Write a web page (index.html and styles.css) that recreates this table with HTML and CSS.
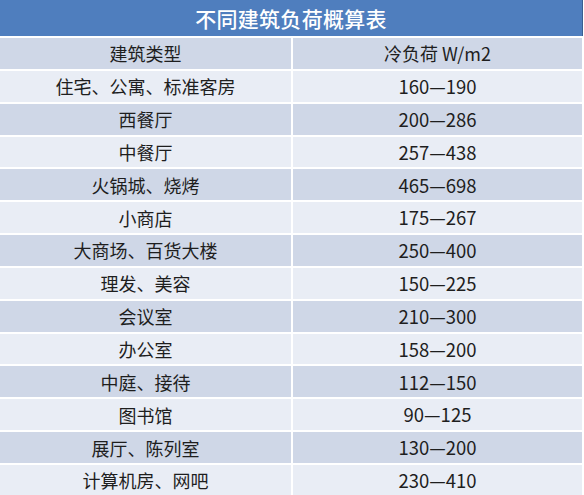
FILE: index.html
```html
<!DOCTYPE html>
<html lang="zh-CN">
<head>
<meta charset="utf-8">
<title>不同建筑负荷概算表</title>
<link rel="stylesheet" href="styles.css">
</head>
<body>
<div class="sheet">
  <div class="title">不同建筑负荷概算表</div>
  <div class="grid">
    <div class="cell head">建筑类型</div><div class="cell head">冷负荷 W/m2</div>
    <div class="cell light">住宅、公寓、标准客房</div><div class="cell light num">160—190</div>
    <div class="cell dark">西餐厅</div><div class="cell dark num">200—286</div>
    <div class="cell light">中餐厅</div><div class="cell light num">257—438</div>
    <div class="cell dark">火锅城、烧烤</div><div class="cell dark num">465—698</div>
    <div class="cell light">小商店</div><div class="cell light num">175—267</div>
    <div class="cell dark">大商场、百货大楼</div><div class="cell dark num">250—400</div>
    <div class="cell light">理发、美容</div><div class="cell light num">150—225</div>
    <div class="cell dark">会议室</div><div class="cell dark num">210—300</div>
    <div class="cell light">办公室</div><div class="cell light num">158—200</div>
    <div class="cell dark">中庭、接待</div><div class="cell dark num">112—150</div>
    <div class="cell light">图书馆</div><div class="cell light num">90—125</div>
    <div class="cell dark">展厅、陈列室</div><div class="cell dark num">130—200</div>
    <div class="cell light">计算机房、网吧</div><div class="cell light num">230—410</div>
  </div>
</div>
</body>
</html>
```
FILE: styles.css
```css
html, body {
  margin: 0;
  padding: 0;
  background: #ffffff;
}
body {
  font-family: "Noto Sans CJK SC", "Noto Sans", sans-serif;
  color: #1e1e1e;
  width: 584px;
  height: 495px;
  overflow: hidden;
}
.sheet {
  display: flex;
  flex-direction: column;
  gap: 2px;
}
.title {
  width: 582px;
  height: 36px;
  background: #4f7ebe;
  border-right: 1px solid #3b5f91;
  color: #ffffff;
  font-size: 21px;
  font-weight: 500;
  display: flex;
  align-items: center;
  justify-content: center;
  letter-spacing: 0.3px;
}
.grid {
  display: grid;
  grid-template-columns: 291px 289px;
  grid-auto-rows: 30.85px;
  column-gap: 2px;
  row-gap: 2px;
}
.cell {
  display: flex;
  align-items: center;
  justify-content: center;
  font-size: 18px;
  line-height: 1;
}
.head, .dark {
  background: #cfd7e7;
}
.light {
  background: #e9edf5;
}
.num {
  font-size: 18.5px;
}
```
